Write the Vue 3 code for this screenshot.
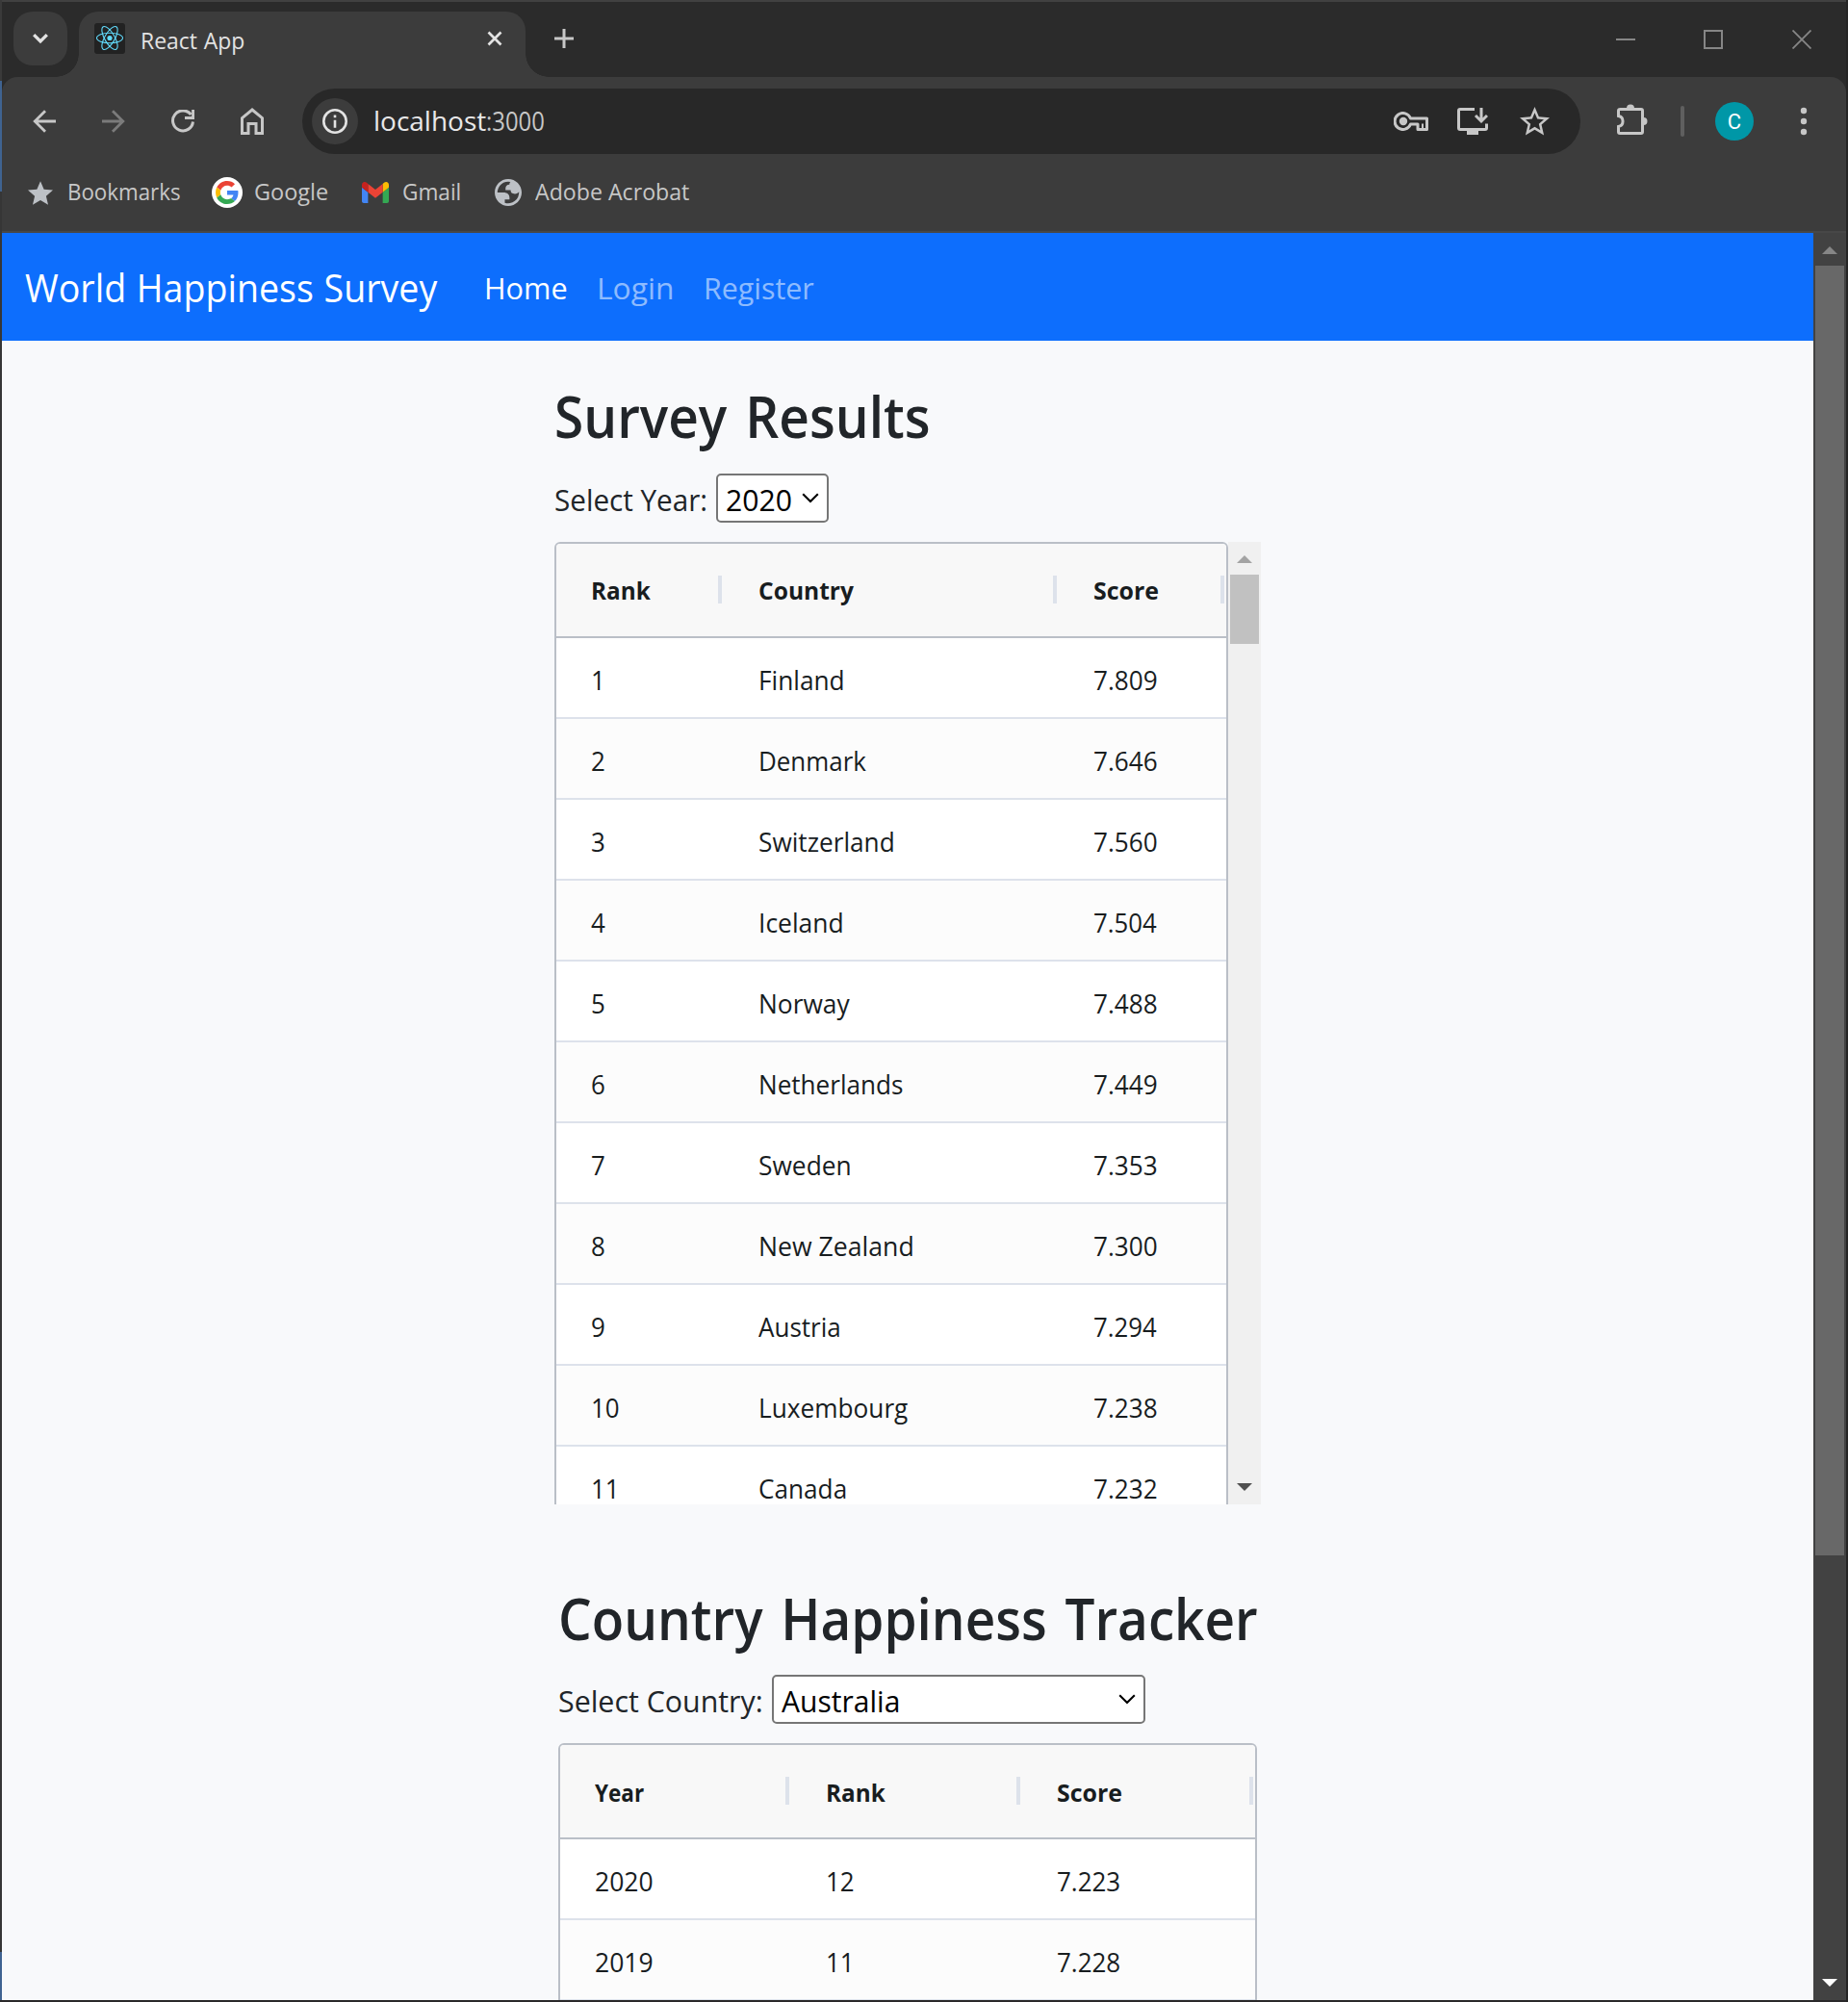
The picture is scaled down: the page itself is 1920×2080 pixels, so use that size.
<script setup>
const surveyRows = [
  ['1', 'Finland', '7.809', 86],
  ['2', 'Denmark', '7.646', 110.5],
  ['3', 'Switzerland', '7.560', 139],
  ['4', 'Iceland', '7.504', 85],
  ['5', 'Norway', '7.488', 93],
  ['6', 'Netherlands', '7.449', 147.5],
  ['7', 'Sweden', '7.353', 94],
  ['8', 'New Zealand', '7.300', 158],
  ['9', 'Austria', '7.294', 84.5],
  ['10', 'Luxembourg', '7.238', 153.5],
  ['11', 'Canada', '7.232', 90],
]

const trackerRows = [
  ['2020', '12', '7.223'],
  ['2019', '11', '7.228'],
]

// Condenses a label horizontally to the given ink width, or by a default ratio.
const ctx = document.createElement('canvas').getContext('2d')
const vFit = {
  mounted(el, { value }) {
    const s = getComputedStyle(el)
    ctx.font = `${s.fontWeight} ${s.fontSize} ${s.fontFamily}`
    ctx.wordSpacing = s.wordSpacing
    const m = ctx.measureText(el.textContent.trim())
    const ink = m.actualBoundingBoxLeft + m.actualBoundingBoxRight
    const k = value ? value / ink : 0.942
    el.style.width = `${m.width * k}px`
    el.style.transform = `scaleX(${k})`
  },
}
</script>

<template>
  <div class="window">
    <div class="edge edge-left"></div>
    <div class="browser">
      <header class="tabstrip">
        <div class="tab-search">
          <svg width="18" height="12" viewBox="0 0 18 12"><path d="M2.200 2.200 9 9l6.800-6.800" fill="none" stroke="#e3e3e3" stroke-width="3.300" /></svg>
        </div>
        <div class="tab">
          <svg class="favicon" width="32" height="32" viewBox="0 0 32 32">
            <rect width="32" height="32" rx="3" fill="#222" />
            <g fill="none" stroke="#61dafb" stroke-width="1.100">
              <ellipse cx="16" cy="15.500" rx="13.500" ry="5.200" />
              <ellipse cx="16" cy="15.500" rx="13.500" ry="5.200" transform="rotate(60 16 15.500)" />
              <ellipse cx="16" cy="15.500" rx="13.500" ry="5.200" transform="rotate(120 16 15.500)" />
            </g>
            <circle cx="16" cy="15.500" r="2.600" fill="#61dafb" />
          </svg>
          <span v-fit="106" class="fit tab-title">React App</span>
          <svg class="tab-close" width="16" height="16" viewBox="0 0 16 16"><path d="M1.500 1.500 14.500 14.500M14.500 1.500 1.500 14.500" stroke="#e3e3e3" stroke-width="2.700" /></svg>
        </div>
        <svg class="new-tab" width="20" height="20" viewBox="0 0 20 20"><path d="M10 0V20M0 10H20" stroke="#c7c7c7" stroke-width="3" /></svg>
        <div class="controls">
          <svg width="20" height="20" viewBox="0 0 20 20"><path d="M0 10H20" stroke="#868686" stroke-width="2" /></svg>
          <svg width="20" height="20" viewBox="0 0 20 20"><rect x="1" y="1" width="18" height="18" fill="none" stroke="#868686" stroke-width="2" /></svg>
          <svg width="20" height="20" viewBox="0 0 20 20"><path d="M.5.5l19 19M19.500.5l-19 19" stroke="#868686" stroke-width="1.800" /></svg>
        </div>
      </header>

      <div class="toolbar-wrap">
      <div class="toolbar-bg">
        <div class="toolbar">
          <div class="nav-icons">
            <svg width="24" height="24" viewBox="0 0 24 24"><path d="M24 12H2.500M13 1.200 2.200 12 13 22.800" fill="none" stroke="#c7c7c7" stroke-width="2.800" /></svg>
            <svg width="24" height="24" viewBox="0 0 24 24"><path d="M0 12H21.500M11 1.200 21.800 12 11 22.800" fill="none" stroke="#7b7b7b" stroke-width="2.800" /></svg>
            <svg width="24" height="24" viewBox="0 0 24 24"><path d="M20.400 5A10.500 10.500 0 1 0 22.500 12.500M22.600 0V8.500H14" fill="none" stroke="#c7c7c7" stroke-width="3" /></svg>
            <svg width="24" height="28" viewBox="0 0 24 28"><path d="M1.500 26.500V10.700L12 2 22.500 10.700V26.500H16V16.500H8V26.500Z" fill="none" stroke="#c7c7c7" stroke-width="3" /></svg>
          </div>
          <div class="omnibox">
            <div class="info">
              <svg width="26" height="26" viewBox="0 0 26 26"><circle cx="13" cy="13" r="11.700" fill="none" stroke="#e3e3e3" stroke-width="2.600" /><path d="M13 11.800V19.700M13 6.500V9.200" stroke="#e3e3e3" stroke-width="2.600" /></svg>
            </div>
            <div class="url"><span v-fit="114.5" class="fit host">localhost</span><span v-fit="59.5" class="fit port">:3000</span></div>
            <div class="omni-actions">
              <svg width="36" height="20" viewBox="0 0 36 20">
                <path d="M17.500 7A8.500 8.500 0 1 0 17.500 13H25V18.500H34.500V7Z" fill="none" stroke="#c7c7c7" stroke-width="3" stroke-linejoin="round" />
                <circle cx="10" cy="10" r="4.200" fill="#c7c7c7" /><path d="M30 12.500V18" stroke="#c7c7c7" stroke-width="2" />
              </svg>
              <svg width="32" height="28" viewBox="0 0 32 28"><path d="M18 1.500H3Q1.500 1.500 1.500 3V21Q1.500 22.500 3 22.500H29Q30.500 22.500 30.500 21V16.500" fill="none" stroke="#c7c7c7" stroke-width="3" /><path d="M10 23H22V28H10Z" fill="#c7c7c7" /><path d="M25 0V14M19 8l6 6 6-6" fill="none" stroke="#c7c7c7" stroke-width="3" /></svg>
              <svg width="31" height="30" viewBox="2 2 20 19.350"><path fill="#c7c7c7" d="M22 9.240l-7.190-.62L12 2 9.190 8.630 2 9.240l5.460 4.730L5.820 21 12 17.270 18.180 21l-1.630-7.030L22 9.240zM12 15.400l-3.760 2.270 1-4.280-3.320-2.880 4.380-.38L12 6.100l1.710 4.040 4.380.38-3.320 2.880 1 4.280L12 15.400z" /></svg>
            </div>
          </div>
          <svg class="ext" width="32" height="32" viewBox="0 0 32 32">
            <path d="M3.500 5.500H25Q26.500 5.500 26.500 7V29Q26.500 30.500 25 30.500H3Q1.500 30.500 1.500 29V23.500A5.600 5.600 0 0 0 1.500 12.500V7Q1.500 5.500 3.500 5.500Z" fill="none" stroke="#c7c7c7" stroke-width="3" />
            <path d="M10 4.500A4 4 0 0 1 18 4.500ZM27.500 14A4 4 0 0 1 27.500 22Z" fill="#c7c7c7" />
          </svg>
          <div class="divider"></div>
          <div class="avatar">C</div>
          <svg class="menu" width="8" height="30" viewBox="0 0 8 30"><g fill="#c7c7c7"><circle cx="4" cy="4" r="3.200" /><circle cx="4" cy="15" r="3.200" /><circle cx="4" cy="26" r="3.200" /></g></svg>
        </div>

        <div class="bookmarks">
          <svg width="26" height="25" viewBox="2 2 20 19"><path fill="#bdc1c6" d="M12 17.270L18.180 21l-1.640-7.030L22 9.240l-7.190-.61L12 2 9.190 8.630 2 9.240l5.460 4.730L5.820 21z" /></svg>
          <span v-fit="115.5" class="fit bm b1">Bookmarks</span>
          <svg width="32" height="32" viewBox="-8 -8 64 64">
            <circle cx="24" cy="24" r="32" fill="#fff" />
            <path fill="#ea4335" d="M24 9.500c3.540 0 6.710 1.220 9.210 3.600l6.850-6.850C35.900 2.380 30.470 0 24 0 14.620 0 6.510 5.380 2.560 13.220l7.980 6.190C12.430 13.720 17.740 9.500 24 9.500z" />
            <path fill="#4285f4" d="M46.980 24.550c0-1.570-.15-3.090-.38-4.550H24v9.020h12.940c-.58 2.960-2.260 5.480-4.780 7.180l7.730 6c4.510-4.180 7.090-10.360 7.090-17.650z" />
            <path fill="#fbbc05" d="M10.530 28.590c-.48-1.450-.76-2.990-.76-4.590s.27-3.140.76-4.590l-7.980-6.190C.92 16.460 0 20.120 0 24c0 3.880.92 7.540 2.560 10.780l7.970-6.190z" />
            <path fill="#34a853" d="M24 48c6.480 0 11.930-2.130 15.890-5.810l-7.730-6c-2.150 1.450-4.920 2.300-8.160 2.300-6.260 0-11.570-4.220-13.470-9.910l-7.980 6.190C6.510 42.620 14.620 48 24 48z" />
          </svg>
          <span v-fit="75" class="fit bm b2">Google</span>
          <svg width="28" height="22" viewBox="52 42 88 66" preserveAspectRatio="none">
            <path fill="#4285f4" d="M58 108h14V74L52 59v43c0 3.320 2.690 6 6 6" />
            <path fill="#34a853" d="M120 108h14c3.320 0 6-2.690 6-6V59l-20 15" />
            <path fill="#fbbc04" d="M120 48v26l20-15v-8c0-7.420-8.470-11.650-14.400-7.200" />
            <path fill="#ea4335" d="M72 74V48l24 18 24-18v26L96 92" />
            <path fill="#c5221f" d="M52 51v8l20 15V48l-5.600-4.200c-5.940-4.450-14.400-.22-14.400 7.200" />
          </svg>
          <span v-fit="58.5" class="fit bm b3">Gmail</span>
          <svg width="28" height="28" viewBox="2 2 20 20">
            <path fill="#bdc1c6" fill-rule="evenodd" d="M12 22C6.477 22 2 17.523 2 12S6.477 2 12 2s10 4.477 10 10-4.477 10-10 10zM4 12h4.400c3.407.022 4.922 1.730 4.543 5.127H9.488v2.470a8.004 8.004 0 0 0 10.498-8.083C19.327 12.504 18.332 13 17 13c-2.137 0-3.206-.916-3.206-2.750h-3.748c-.274-2.728.683-4.092 2.870-4.092 0-.975.327-1.597.811-1.970A8 8 0 0 0 4 12z" />
          </svg>
          <span v-fit="160" class="fit bm b4">Adobe Acrobat</span>
        </div>
      </div>
      </div>

      <div class="viewport">
        <div class="page">
          <nav class="navbar">
            <span v-fit="428.5" class="fit brand">World Happiness Survey</span>
            <span v-fit="83" class="fit link home active">Home</span>
            <span v-fit="75" class="fit link login">Login</span>
            <span v-fit="112" class="fit link register">Register</span>
          </nav>

          <section class="survey">
            <h1><span v-fit="387" class="fit">Survey Results</span></h1>
            <div class="picker">
              <label><span v-fit="156" class="fit">Select Year:</span></label>
              <div class="select year">
                <span v-fit="67" class="fit">2020</span>
                <svg width="18" height="11" viewBox="0 0 18 11"><path d="M1.200 1.200 9 9l7.800-7.800" fill="none" stroke="#000" stroke-width="2.100" /></svg>
              </div>
            </div>
            <div class="scroller">
              <div class="grid">
                <div class="row head">
                  <div class="cell"><span v-fit="60" class="fit">Rank</span></div>
                  <div class="cell"><span v-fit="98.5" class="fit">Country</span></div>
                  <div class="cell"><span v-fit="66" class="fit">Score</span></div>
                </div>
                <div v-for="r in surveyRows" :key="r[0]" class="row">
                  <div class="cell"><span v-fit class="fit">{{ r[0] }}</span></div>
                  <div class="cell"><span v-fit="r[3]" class="fit">{{ r[1] }}</span></div>
                  <div class="cell"><span v-fit="65" class="fit">{{ r[2] }}</span></div>
                </div>
              </div>
              <div class="bar light">
                <svg width="16" height="8" viewBox="0 0 16 8"><path d="M8 0 16 8H0Z" fill="#a3a3a3" /></svg>
                <div class="thumb"></div>
                <svg class="down" width="16" height="8" viewBox="0 0 16 8"><path d="M0 0H16L8 8Z" fill="#505050" /></svg>
              </div>
            </div>
          </section>

          <section class="tracker">
            <h1><span v-fit="723.5" class="fit">Country Happiness Tracker</span></h1>
            <div class="picker">
              <label><span v-fit="209.5" class="fit">Select Country:</span></label>
              <div class="select country">
                <span v-fit="121" class="fit">Australia</span>
                <svg width="18" height="11" viewBox="0 0 18 11"><path d="M1.200 1.200 9 9l7.800-7.800" fill="none" stroke="#000" stroke-width="2.100" /></svg>
              </div>
            </div>
            <div class="grid">
              <div class="row head">
                <div class="cell"><span v-fit="51.5" class="fit">Year</span></div>
                <div class="cell"><span v-fit="60" class="fit">Rank</span></div>
                <div class="cell"><span v-fit="66" class="fit">Score</span></div>
              </div>
              <div v-for="r in trackerRows" :key="r[0]" class="row">
                <div class="cell"><span v-fit="59" class="fit">{{ r[0] }}</span></div>
                <div class="cell"><span v-fit class="fit">{{ r[1] }}</span></div>
                <div class="cell"><span v-fit="64.5" class="fit">{{ r[2] }}</span></div>
              </div>
            </div>
          </section>
        </div>
        <div class="bar dark">
          <svg width="16" height="8" viewBox="0 0 16 8"><path d="M8 0 16 8H0Z" fill="#868686" /></svg>
          <div class="thumb"></div>
          <svg class="down" width="16" height="8" viewBox="0 0 16 8"><path d="M0 0H16L8 8Z" fill="#fff" /></svg>
        </div>
      </div>
    </div>
    <div class="edge edge-right"></div>
  </div>
</template>

<style>
html, body { margin: 0; background: #2b2b2b; overflow: hidden; }
</style>

<style scoped>
.window {
  display: grid; grid-template-columns: 2px 1916px 2px; width: 1920px; height: 2080px;
  overflow: hidden; box-sizing: border-box; font-family: "Open Sans", "Noto Sans", sans-serif;
}
.window * { box-sizing: border-box; }
svg { display: block; flex: none; }
.fit { display: inline-block; white-space: nowrap; transform-origin: 0 50%; flex: none; }
.edge-left { background: linear-gradient(#3a3a3a 84px, #3f6391 84px 199px, #363636 199px 2028px, #3f6391 2028px 2078px, #2a2a2a 2078px); }
.edge-right { background: #252525; }
.browser { display: flex; flex-direction: column; height: 2080px; border-top: 2px solid #414141; border-bottom: 2px solid #2a292a; }

.tabstrip { display: flex; height: 78px; background: #2b2b2b; padding-top: 10px; flex: none; }
.tab-search { width: 56px; height: 56px; margin-left: 12px; border-radius: 20px; background: #3c3c3c; display: flex; align-items: center; justify-content: center; }
.tab { position: relative; display: flex; align-items: center; width: 464px; height: 68px; margin-left: 12px; padding: 0 24px 12px 16px; border-radius: 20px 20px 0 0; background: #3c3c3c; }
.tab::before, .tab::after { content: ""; position: absolute; bottom: 0; width: 24px; height: 24px; }
.tab::before { left: -24px; background: radial-gradient(circle at 0 0, transparent 23.5px, #3c3c3c 24px); }
.tab::after { right: -24px; background: radial-gradient(circle at 100% 0, transparent 23.5px, #3c3c3c 24px); }
.tab-title { margin-left: 16px; padding-top: 3px; font-size: 23.5px; line-height: 32px; word-spacing: 1px; color: #e3e3e3; }
.tab-close { margin-left: auto; }
.new-tab { margin: 18px 0 0 30px; }
.controls { display: flex; gap: 72px; margin: 19px 36px 0 auto; }
.controls svg:first-child { margin-right: -1px; }

.toolbar-wrap { flex: none; background: #2b2b2b; }
.toolbar-bg { height: 162px; background: #3c3c3c; border-bottom: 2px solid #474747; border-radius: 16px 16px 0 0; }
.toolbar { display: flex; align-items: center; height: 92px; padding-left: 32px; }
.nav-icons { display: flex; align-items: center; gap: 48px; }
.omnibox { display: flex; align-items: center; width: 1328px; height: 68px; margin-left: 40px; padding-left: 10px; border-radius: 34px; background: #282828; }
.info { display: flex; align-items: center; justify-content: center; width: 48px; height: 48px; border-radius: 50%; background: #3c3c3c; }
.url { display: flex; margin-left: 15.5px; font-size: 27px; line-height: 40px; }
.host { color: #e8e8e8; }
.port { color: #c7c7c7; }
.omni-actions { display: flex; align-items: center; margin-left: auto; gap: 30px; padding-right: 32px; }
.omni-actions svg:nth-child(2) { margin-right: 3px; }
.ext { margin: -4px 0 0 38px; }
.divider { width: 4px; height: 32px; margin-left: 34px; border-radius: 2px; background: #5f5f5f; }
.avatar { width: 40px; height: 40px; margin-left: 32px; border-radius: 50%; background: #0097a7; color: #fff; font: 22px/41px Roboto, sans-serif; text-align: center; }
.menu { margin-left: 48px; }
.bookmarks { display: flex; align-items: center; height: 56px; padding-left: 27px; }
.bm { font-size: 23.5px; line-height: 32px; padding-bottom: 2px; color: #c7c7c7; }
.b1 { margin: 0 32px 0 15px; }
.b2 { margin: 0 35px 0 12px; }
.b3 { margin: 0 35px 0 14px; }
.b4 { margin-left: 14px; }

.viewport { display: flex; flex: 1; min-height: 0; }
.page { width: 1882px; background: #f8f9fb; overflow: hidden; }
.navbar { display: flex; align-items: center; height: 112px; background: #0d6efd; color: #fff; padding-left: 24px; }
.brand { font-size: 39.5px; word-spacing: 1px; padding-top: 2px; }
.link { font-size: 31.5px; color: rgba(255, 255, 255, .55); }
.link.active { color: #fff; }
.home { margin-left: 48.5px; }
.login { margin-left: 31px; }
.register { margin-left: 30.5px; }

h1 { margin: 0; font-size: 59px; font-weight: 600; line-height: 74px; height: 72px; word-spacing: 5px; color: #212529; }
.survey { margin: 41px 0 0 574px; width: 734px; }
.tracker { margin: 81px 0 0 578px; width: 726px; }
.picker { display: flex; align-items: center; height: 51px; font-size: 31.5px; line-height: 44px; }
.survey .picker { margin: 25px 0 20px; }
.tracker .picker { margin: 24px 0 20px; }
.picker label { color: #212529; padding-top: 2px; width: 160px; }
.tracker .picker label { width: 214px; }
.select { display: flex; align-items: center; justify-content: space-between; height: 51px; border: 2px solid #767676; border-radius: 5px; background: #fff; color: #000; padding: 2px 8px 0 8px; }
.select svg { margin-bottom: 3px; }
.year { width: 117px; margin-left: 8px; }
.country { width: 388px; margin-left: 8px; }

.scroller { display: flex; height: 1000px; overflow: hidden; }
.grid { border: 2px solid #babfc7; border-radius: 6px; overflow: hidden; background: #fff; color: #181d1f; flex: none; align-self: flex-start; }
.survey .grid { width: 700px; }
.tracker .grid { width: 726px; height: 300px; }
.row { display: grid; height: 84px; border-bottom: 2px solid #dde2eb; font-size: 27.5px; line-height: 88px; }
.survey .row { grid-template-columns: 174px 348px 174px; }
.tracker .row { grid-template-columns: 240px 240px 242px; }
.row:nth-child(odd) { background: #fcfcfc; }
.row.head { height: 98px; line-height: 97px; background: #f8f8f8; border-bottom-color: #babfc7; font-size: 25.5px; font-weight: 700; }
.tracker .row.head { line-height: 98px; }
.cell { position: relative; padding-left: 36px; height: 82px; overflow: hidden; }
.head .cell { height: 96px; }
.head .cell::after { content: ""; position: absolute; right: 2px; top: 33px; width: 4px; height: 29px; background: #dde2eb; }

.bar { display: flex; flex-direction: column; align-items: center; width: 34px; }
.bar > svg { margin-top: 14px; }
.bar .down { margin: auto 0 14px; }
.light { background: #f0f0f0; }
.light .thumb { width: 30px; height: 72px; margin-top: 12px; background: #c1c1c1; }
.dark { background: #424242; }
.dark .thumb { width: 30px; height: 1340px; margin-top: 12px; background: #686868; }
</style>
